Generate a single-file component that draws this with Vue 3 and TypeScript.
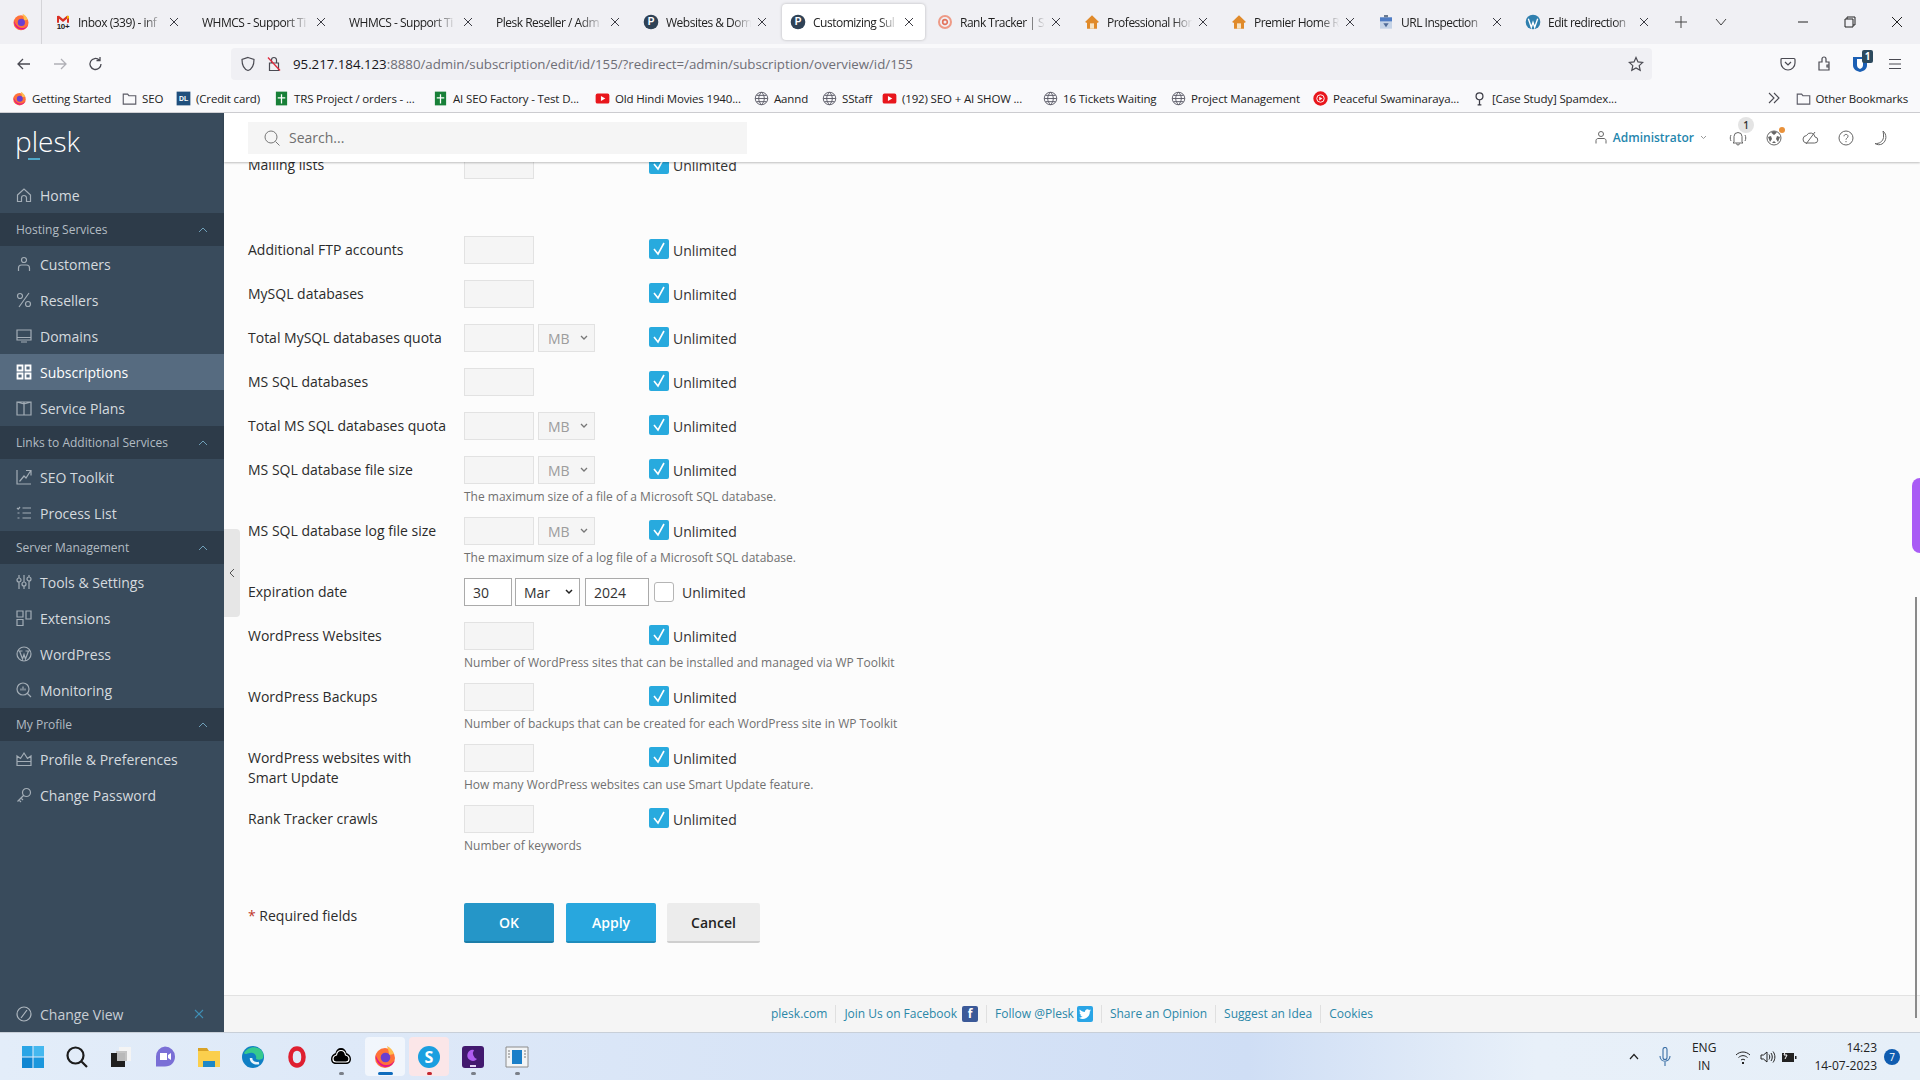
<script setup lang="ts">
type Shape = { d: string; fill?: string; stroke?: string; sw?: number };
type Glyph = { shapes: Shape[]; label?: string; labelColor?: string; labelSize?: number; labelY?: number };

const ring = (cx: number, cy: number, r: number) =>
	`M${cx - r} ${cy}a${r} ${r} 0 1 0 ${r * 2} 0a${r} ${r} 0 1 0 ${-r * 2} 0z`;

const firefox: Shape[] = [
	{ d: ring(12, 13, 10), fill: "#ff7139" },
	{ d: "M14 1c3 1.500 6 4 7 8l-5 1c0-3-1-6-2-9z", fill: "#ffbd4f" },
	{ d: "M2.500 10c0 7 5 12.500 11 12 4-.3 7-3 8-6.500-2 3-5 5-9 4.500-5-.5-8-5-10-10z", fill: "#e31587" },
	{ d: ring(12.500, 12.500, 4.800), fill: "#6a3fd0" },
];

const favicons: Record<string, Glyph> = {
	none: { shapes: [] },
	gmail: {
		shapes: [
			{ d: "M3 3v10h3V7l6 5 6-5v6h3V3l-3-.5-6 5-6-5z", fill: "#d93025" },
			{ d: "M18 2.500 21 3v3l-3 2z", fill: "#f4b400" },
		],
		label: "10+",
		labelColor: "#222",
		labelSize: 12,
		labelY: 23,
	},
	plesk: {
		shapes: [{ d: ring(12, 12, 11), fill: "#2f4256" }],
		label: "P",
		labelColor: "#fff",
		labelSize: 15,
		labelY: 17,
	},
	rank: {
		shapes: [
			{ d: ring(12, 12, 9), stroke: "#ee9a86", sw: 3 },
			{ d: ring(12, 12, 3.500), stroke: "#e2725b", sw: 2.500 },
		],
	},
	house: {
		shapes: [
			{ d: "M12 2 1.500 12l3 1.500V22h15v-8.500l3-1.500z", fill: "#e08a2a" },
			{ d: "M9 14h6v8H9z", fill: "#f7e3c3" },
		],
	},
	inspect: {
		shapes: [
			{ d: "M3 5h18v17H3z", fill: "#c5d3e6" },
			{ d: "M3 5h18v6H3z", fill: "#4f7cc4" },
			{ d: "M9 1.500h6V5H9z", fill: "#6b7a90" },
			{ d: "M8 14h8l-4 6z", fill: "#4f6a96" },
		],
	},
	wp: {
		shapes: [
			{ d: ring(12, 12, 11), fill: "#2f7fae" },
			{ d: "M5 7l4.500 13L12 12.500 14.500 20 19 7", stroke: "#fff", sw: 2 },
		],
	},
	firefox: { shapes: firefox },
	folder: {
		shapes: [{ d: "M2 5h7l2 2.500h11V21H2z", stroke: "#5b5b66", sw: 1.800 }],
	},
	dl: {
		shapes: [{ d: "M1 1h22v22H1z", fill: "#1f4f7d" }],
		label: "DL",
		labelColor: "#fff",
		labelSize: 11,
		labelY: 16,
	},
	sheet: {
		shapes: [
			{ d: "M3 1h18v22H3z", fill: "#188038" },
			{ d: "M11 5h2v5h5v2h-5v8h-2v-8H6v-2h5z", fill: "#fff" },
		],
	},
	yt: {
		shapes: [
			{ d: "M4 4h16a3 3 0 0 1 3 3v10a3 3 0 0 1-3 3H4a3 3 0 0 1-3-3V7a3 3 0 0 1 3-3z", fill: "#e8161c" },
			{ d: "M9.500 8v8l7-4z", fill: "#fff" },
		],
	},
	ytm: {
		shapes: [
			{ d: ring(12, 12, 11.500), fill: "#e8161c" },
			{ d: ring(12, 12, 6), stroke: "#fff", sw: 1.500 },
			{ d: "M10 9v6l5-3z", fill: "#fff" },
		],
	},
	globe: {
		shapes: [
			{
				d: `${ring(12, 12, 10)}M2 12h20M12 2c-6 6-6 14 0 20M12 2c6 6 6 14 0 20M4 7h16M4 17h16`,
				stroke: "#5b5b66",
				sw: 1.500,
			},
		],
	},
	pin: {
		shapes: [
			{ d: `${ring(12, 8.500, 5.500)}M12 14v7M9 22h6`, stroke: "#3a3a44", sw: 2 },
		],
	},
};

const tabs = [
	{ icon: "gmail", title: "Inbox (339) - inf", on: false },
	{ icon: "none", title: "WHMCS - Support Ti", on: false },
	{ icon: "none", title: "WHMCS - Support Ti", on: false },
	{ icon: "none", title: "Plesk Reseller / Adm", on: false },
	{ icon: "plesk", title: "Websites & Dom", on: false },
	{ icon: "plesk", title: "Customizing Sul", on: true },
	{ icon: "rank", title: "Rank Tracker | Se", on: false },
	{ icon: "house", title: "Professional Hon", on: false },
	{ icon: "house", title: "Premier Home R", on: false },
	{ icon: "inspect", title: "URL Inspection", on: false },
	{ icon: "wp", title: "Edit redirection", on: false },
];

const bookmarks = [
	{ icon: "firefox", text: "Getting Started", w: 110 },
	{ icon: "folder", text: "SEO", w: 54 },
	{ icon: "dl", text: "(Credit card)", w: 98 },
	{ icon: "sheet", text: "TRS Project / orders - ...", w: 159 },
	{ icon: "sheet", text: "AI SEO Factory - Test D...", w: 162 },
	{ icon: "yt", text: "Old Hindi Movies 1940...", w: 159 },
	{ icon: "globe", text: "Aannd", w: 68 },
	{ icon: "globe", text: "SStaff", w: 60 },
	{ icon: "yt", text: "(192) SEO + AI SHOW ...", w: 161 },
	{ icon: "globe", text: "16 Tickets Waiting", w: 128 },
	{ icon: "globe", text: "Project Management", w: 142 },
	{ icon: "ytm", text: "Peaceful Swaminaraya...", w: 159 },
	{ icon: "pin", text: "[Case Study] Spamdex...", w: 150 },
];

type NavItem = { name: string; d: string; on?: boolean };
type NavGroup = { title?: string; items: NavItem[] };

const nav: NavGroup[] = [
	{
		items: [{ name: "Home", d: "M1.500 8 8 2l6.500 6v6.500h-4v-3.500a2.500 2.500 0 0 0-5 0v3.500h-4z" }],
	},
	{
		title: "Hosting Services",
		items: [
			{ name: "Customers", d: `${ring(8, 4, 2.500)}M2.500 15v-3c0-2 1.500-3 3-3h5c1.500 0 3 1 3 3v3` },
			{ name: "Resellers", d: `M3 15 13 1${ring(4, 4, 2.500)}${ring(12, 12, 2.500)}` },
			{ name: "Domains", d: "M1 2h14v10H1zM1 9.500h14M5 14h6" },
			{ name: "Subscriptions", d: "M1.500 1.500h5v5h-5zM9.500 1.500h5v5h-5zM1.500 9.500h5v5h-5zM9.500 9.500h5v5h-5z", on: true },
			{ name: "Service Plans", d: "M1 2h14v13H1zM8 2v13M1 2l7 2 7-2" },
		],
	},
	{
		title: "Links to Additional Services",
		items: [
			{ name: "SEO Toolkit", d: "M1 1v14h14M3.500 12.500 8 7l2 2 4.500-7M10 1.500h5v5" },
			{ name: "Process List", d: "M1 3l1.200 1.200L4 2M6.500 3H15M1.500 8h2M6.500 8H15M1.500 13h2M6.500 13H15" },
		],
	},
	{
		title: "Server Management",
		items: [
			{
				name: "Tools & Settings",
				d: `M3 1v3M3 8v7M8 1v7M8 12v3M13 1v2M13 7v8${ring(3, 6, 2)}${ring(8, 10, 2)}${ring(13, 5, 2)}`,
			},
			{ name: "Extensions", d: "M1 1h6v6H1zM1 9.500h6v6H1zM10 1h5v8h-5z" },
			{ name: "WordPress", d: `${ring(8, 8, 7)}M3.500 5l3 8L8 8.500 9.500 13l3-8M2.500 5h4M9.500 5h4` },
			{ name: "Monitoring", d: `${ring(7, 7, 6)}M11.500 11.500 15 15M5 8.500V6.500M7 8.500v-4M9 8.500V6.500` },
		],
	},
	{
		title: "My Profile",
		items: [
			{ name: "Profile & Preferences", d: "M1 5l3.500 2.500L8 2l3.500 5.500L15 5v9.500H1zM1 10.500h14" },
			{ name: "Change Password", d: `${ring(10.500, 5.500, 4)}M7.500 8.500 1.500 14.500M3 13l2 2M5 11l2 2` },
		],
	},
];

type Row = { label: string; select?: boolean; hint?: string; date?: boolean; spaced?: boolean };

const rows: Row[] = [
	{ label: "Mailing lists" },
	{ label: "Additional FTP accounts", spaced: true },
	{ label: "MySQL databases" },
	{ label: "Total MySQL databases quota", select: true },
	{ label: "MS SQL databases" },
	{ label: "Total MS SQL databases quota", select: true },
	{ label: "MS SQL database file size", select: true, hint: "The maximum size of a file of a Microsoft SQL database." },
	{ label: "MS SQL database log file size", select: true, hint: "The maximum size of a log file of a Microsoft SQL database." },
	{ label: "Expiration date", date: true },
	{ label: "WordPress Websites", hint: "Number of WordPress sites that can be installed and managed via WP Toolkit" },
	{ label: "WordPress Backups", hint: "Number of backups that can be created for each WordPress site in WP Toolkit" },
	{ label: "WordPress websites with Smart Update", hint: "How many WordPress websites can use Smart Update feature." },
	{ label: "Rank Tracker crawls", hint: "Number of keywords" },
];

const footerLinks = ["plesk.com", "Join Us on Facebook", "Follow @Plesk", "Share an Opinion", "Suggest an Idea", "Cookies"];

const taskbar: { shapes: Shape[]; label?: string; cls?: string }[] = [
	{
		shapes: [
			{ d: "M1 1h10.500v10.500H1z", fill: "#2aa5e6" },
			{ d: "M12.500 1H23v10.500H12.500z", fill: "#45b8ef" },
			{ d: "M1 12.500h10.500V23H1z", fill: "#0f86d2" },
			{ d: "M12.500 12.500H23V23H12.500z", fill: "#1b97dd" },
		],
	},
	{ shapes: [{ d: `${ring(10.500, 10.500, 8)}M16.500 16.500 22 22`, stroke: "#1c1c1c", sw: 2.200 }] },
	{
		shapes: [
			{ d: "M10 2h12v14H10z", fill: "#f4f4f4" },
			{ d: "M7 6h11v10H7z", fill: "#c4c4c4" },
			{ d: "M2 8h14v14H2z", fill: "#1f1f1f" },
			{ d: "M8 8h8v8H8z", fill: "#b9b9b9" },
		],
	},
	{
		shapes: [
			{ d: "M12 1.500a10 10 0 0 1 10 10c0 6-4 10-10 10H3v-10a10 10 0 0 1 9-10z", fill: "#7a6fd6" },
			{ d: "M7 8h7v7H7zM15 10l3-2v7l-3-2z", fill: "#fff" },
		],
	},
	{
		shapes: [
			{ d: "M1 3h9l2 3H1z", fill: "#d9a226" },
			{ d: "M1 6h22v16H1z", fill: "#fbcf4d" },
			{ d: "M6 16h12v6H6z", fill: "#1e88c7" },
		],
	},
	{
		shapes: [
			{ d: ring(12, 12, 11), fill: "#0f7fc4" },
			{ d: "M3 8c3-6 12-8 17-3 2 2 3 5 2 8-1 2-5 2-7 1 1-4-2-7-6-6-3 .5-5 2-6 0z", fill: "#36c98d" },
			{ d: "M10 13c0 4 4 6 8 5", stroke: "#e8f4fb", sw: 2.500 },
		],
	},
	{ shapes: [{ d: "M12 3.500c-4 0-6.500 3.800-6.500 8.500s2.500 8.500 6.500 8.500 6.500-3.800 6.500-8.500S16 3.500 12 3.500z", stroke: "#df1f30", sw: 4.500 }] },
	{
		shapes: [
			{
				d: "M12 3c-3 0-5 2-5.500 5C4 9 2 11 2 14c0 3 2 5 5 5h10c3 0 5-2 5-5 0-3-2-5-4.500-6C17 5 15 3 12 3z",
				fill: "#000",
			},
			{ d: "M7 17h10c2 0 3-1 3-3s-1.500-3.500-3.500-4C16 7 14.500 5.500 12 5.500S8 7 7.500 10C5.500 10.500 4 12 4 14s1 3 3 3z", stroke: "#fff", sw: 1.200 },
		],
	},
	{ shapes: firefox },
	{ shapes: [{ d: ring(12, 12, 11), fill: "#1b9fe0" }], label: "S" },
	{
		shapes: [
			{ d: "M4 1h16a3 3 0 0 1 3 3v16a3 3 0 0 1-3 3H4a3 3 0 0 1-3-3V4a3 3 0 0 1 3-3z", fill: "#42196e" },
			{ d: "M13 5a5.500 5.500 0 1 0 3 9 6 6 0 0 1-3-9z", fill: "#b05cf0" },
			{ d: "M9 20h6v2H9z", fill: "#e3d3f3" },
		],
	},
	{
		shapes: [
			{ d: "M1 2h22v20H1z", fill: "#f2f4f6", stroke: "#8c8c8c", sw: 1 },
			{ d: "M7 5h10v14H7z", fill: "#1a7fc9" },
			{ d: "M3 6h2M3 9h2M3 12h2M19 6h2M19 9h2M19 12h2", stroke: "#7a7a7a", sw: 1 },
		],
	},
];
</script>

<template>
	<div class="screen">
		<div class="tabstrip">
			<div class="browser-logo">
				<svg width="18" height="18" viewBox="0 0 24 24">
					<path v-for="s in firefox" :d="s.d" :fill="s.fill" />
				</svg>
			</div>
			<div v-for="tab in tabs" class="tab" :class="{ on: tab.on }">
				<svg v-if="tab.icon !== 'none'" class="fav" viewBox="0 0 24 24">
					<path
						v-for="s in favicons[tab.icon].shapes"
						:d="s.d"
						:fill="s.fill || 'none'"
						:stroke="s.stroke"
						:stroke-width="s.sw"
					/>
					<text
						v-if="favicons[tab.icon].label"
						x="12"
						:y="favicons[tab.icon].labelY"
						text-anchor="middle"
						font-family="Liberation Sans"
						font-weight="700"
						:font-size="favicons[tab.icon].labelSize"
						:fill="favicons[tab.icon].labelColor"
					>{{ favicons[tab.icon].label }}</text>
				</svg>
				<span class="tab-title">{{ tab.title }}</span>
				<svg class="tab-close" width="10" height="10" viewBox="0 0 10 10">
					<path d="M1 1l8 8M9 1l-8 8" stroke="#3c3c44" stroke-width="1" fill="none" />
				</svg>
			</div>
			<svg class="strip-plus" width="12" height="12" viewBox="0 0 12 12">
				<path d="M6 0v12M0 6h12" stroke="#444" stroke-width="1" fill="none" />
			</svg>
			<svg class="strip-more" width="12" height="8" viewBox="0 0 12 8">
				<path d="M1 1l5 6 5-6" stroke="#444" stroke-width="1" fill="none" />
			</svg>
			<div class="win-controls">
				<svg width="12" height="12" viewBox="0 0 12 12"><path d="M1 6h10" stroke="#222" fill="none" /></svg>
				<svg width="12" height="12" viewBox="0 0 12 12">
					<path d="M3 3V1h8v8H9M1 3h8v8H1z" stroke="#222" fill="none" />
				</svg>
				<svg width="12" height="12" viewBox="0 0 12 12"><path d="M1 1l10 10M11 1L1 11" stroke="#222" fill="none" /></svg>
			</div>
		</div>

		<div class="navbar">
			<div class="nav-buttons">
				<svg width="16" height="16" viewBox="0 0 16 16">
					<path d="M14 8H2M7 3 2 8l5 5" stroke="#4a4a52" stroke-width="1.300" fill="none" />
				</svg>
				<svg width="16" height="16" viewBox="0 0 16 16">
					<path d="M2 8h12M9 3l5 5-5 5" stroke="#b0b0b6" stroke-width="1.300" fill="none" />
				</svg>
				<svg width="16" height="16" viewBox="0 0 16 16">
					<path d="M13 8a5.500 5.500 0 1 1-1.700-4M12 1v3.500H8.500" stroke="#4a4a52" stroke-width="1.300" fill="none" />
				</svg>
			</div>
			<div class="urlbar">
				<svg width="16" height="16" viewBox="0 0 16 16">
					<path d="M8 1.500l6 2c0 6-1.500 9.500-6 11-4.500-1.500-6-5-6-11z" stroke="#4a4a52" stroke-width="1.200" fill="none" />
				</svg>
				<svg class="lock" width="16" height="16" viewBox="0 0 16 16">
					<path d="M3.500 7h9v7.500h-9zM5.500 7V4a2.500 2.500 0 0 1 5 0v3" stroke="#4a4a52" stroke-width="1.200" fill="none" />
					<path d="M2 1.500l12 13" stroke="#e0293d" stroke-width="1.300" fill="none" />
				</svg>
				<span class="url"><b>95.217.184.123</b>:8880/admin/subscription/edit/id/155/?redirect=/admin/subscription/overview/id/155</span>
				<svg class="star" width="16" height="16" viewBox="0 0 16 16">
					<path d="M8 1.500l2 4.400 4.700.5-3.500 3.200 1 4.700L8 11.900l-4.200 2.400 1-4.700L1.300 6.400 6 5.900z" stroke="#4a4a52" stroke-width="1.200" fill="none" />
				</svg>
			</div>
			<div class="nav-tools">
				<svg width="16" height="16" viewBox="0 0 16 16">
					<path d="M2 2.500h12a1 1 0 0 1 1 1V7a7 7 0 0 1-14 0V3.500a1 1 0 0 1 1-1zM5 6l3 3 3-3" stroke="#4a4a52" stroke-width="1.200" fill="none" />
				</svg>
				<svg width="16" height="16" viewBox="0 0 16 16">
					<path d="M3 6h3V3a2 2 0 0 1 4 0v3h3v8H3zM13 9h-2v2h2" stroke="#4a4a52" stroke-width="1.200" fill="none" />
				</svg>
				<div class="ext">
					<svg width="16" height="18" viewBox="0 0 16 18">
						<path d="M1 2h14v8c0 4-3 6-7 7-4-1-7-3-7-7z" fill="#1b5fb4" />
						<path d="M5 4h6v6c0 2-1 3-3 4-2-1-3-2-3-4z" fill="#fff" />
					</svg>
					<span class="ext-badge">1</span>
				</div>
				<svg width="14" height="12" viewBox="0 0 14 12">
					<path d="M1 1.500h12M1 6h12M1 10.500h12" stroke="#4a4a52" stroke-width="1.200" fill="none" />
				</svg>
			</div>
		</div>

		<div class="bookmarks">
			<div v-for="mark in bookmarks" class="mark" :style="{ width: mark.w + 'px' }">
				<svg class="mark-icon" viewBox="0 0 24 24">
					<path
						v-for="s in favicons[mark.icon].shapes"
						:d="s.d"
						:fill="s.fill || 'none'"
						:stroke="s.stroke"
						:stroke-width="s.sw"
					/>
					<text
						v-if="favicons[mark.icon].label"
						x="12"
						:y="favicons[mark.icon].labelY"
						text-anchor="middle"
						font-family="Liberation Sans"
						font-weight="700"
						:font-size="favicons[mark.icon].labelSize"
						:fill="favicons[mark.icon].labelColor"
					>{{ favicons[mark.icon].label }}</text>
				</svg>
				<span>{{ mark.text }}</span>
			</div>
			<div class="mark-end">
				<svg width="14" height="12" viewBox="0 0 14 12">
					<path d="M2 1l5 5-5 5M7 1l5 5-5 5" stroke="#4a4a52" stroke-width="1.100" fill="none" />
				</svg>
				<svg class="mark-icon" viewBox="0 0 24 24">
					<path :d="favicons.folder.shapes[0].d" fill="none" stroke="#5b5b66" stroke-width="1.800" />
				</svg>
				<span>Other Bookmarks</span>
			</div>
		</div>

		<div class="app">
			<aside class="sidebar">
				<div class="logo">
					<span class="logo-text">plesk</span>
					<i class="logo-bar"></i>
				</div>
				<template v-for="group in nav">
					<div v-if="group.title" class="nav-group">
						<span>{{ group.title }}</span>
						<svg width="10" height="6" viewBox="0 0 10 6">
							<path d="M1 5l4-4 4 4" stroke="#6f9fb8" stroke-width="1" fill="none" />
						</svg>
					</div>
					<div v-for="item in group.items" class="nav-item" :class="{ on: item.on }">
						<svg width="16" height="16" viewBox="0 0 16 16">
							<path :d="item.d" fill="none" stroke="currentColor" :stroke-width="item.on ? 1.800 : 1.200" />
						</svg>
						<span>{{ item.name }}</span>
					</div>
				</template>
				<div class="change-view">
					<svg width="16" height="16" viewBox="0 0 16 16">
						<path d="M1 8a7 7 0 1 0 14 0a7 7 0 1 0-14 0zM11 4l-6 8" stroke="#aeb7bf" stroke-width="1.200" fill="none" />
					</svg>
					<span>Change View</span>
					<svg class="view-close" width="10" height="10" viewBox="0 0 10 10">
						<path d="M1 1l8 8M9 1l-8 8" stroke="#3f8fb5" stroke-width="1.100" fill="none" />
					</svg>
				</div>
			</aside>

			<main class="main">
				<header class="topbar">
					<div class="search">
						<svg width="16" height="16" viewBox="0 0 16 16">
							<path d="M1 7a6 6 0 1 0 12 0a6 6 0 1 0-12 0zM11.500 11.500 15.500 15.500" stroke="#777" stroke-width="1" fill="none" />
						</svg>
						<span>Search...</span>
					</div>
					<div class="account">
						<svg width="12" height="13" viewBox="0 0 12 13">
							<path d="M3.500 3a2.500 2.500 0 1 0 5 0a2.500 2.500 0 1 0-5 0zM1 12.500V9.500c0-1 1-2 2-2h6c1 0 2 1 2 2v3" stroke="#666" fill="none" />
						</svg>
						<span class="admin">Administrator</span>
						<svg width="7" height="5" viewBox="0 0 7 5"><path d="M1 1l2.500 2.500L6 1" stroke="#999" fill="none" /></svg>
					</div>
					<div class="top-icons">
						<div class="top-icon">
							<svg width="18" height="16" viewBox="0 0 18 16">
								<path d="M5 12V6.500a4 4 0 0 1 8 0V12l1 1H4zM7.500 13.500a1.500 1.500 0 0 0 3 0M2 5c-1 2-1 4 0 6M16 5c1 2 1 4 0 6" stroke="#666" fill="none" />
							</svg>
							<span class="bell-badge">1</span>
						</div>
						<div class="top-icon">
							<svg width="18" height="18" viewBox="0 0 18 18">
								<path d="M2 9a7 7 0 1 0 14 0a7 7 0 1 0-14 0z" stroke="#666" fill="none" />
								<path d="M6 3.500 9 6l3-2.500-3-1.500zM3 8l3-1 1 3-2 3zM15 8l-3-1-1 3 2 3zM7 14h4l-2-2z" fill="#666" />
							</svg>
							<i class="orange-dot"></i>
						</div>
						<div class="top-icon">
							<svg width="18" height="16" viewBox="0 0 18 16">
								<path d="M5 13h8.500a3 3 0 0 0 .5-6 4.500 4.500 0 0 0-8.500-1.500A3.800 3.800 0 0 0 5 13zM14 2 5 14" stroke="#666" fill="none" />
							</svg>
						</div>
						<div class="top-icon">
							<svg width="16" height="16" viewBox="0 0 16 16">
								<path d="M1 8a7 7 0 1 0 14 0a7 7 0 1 0-14 0zM6 6.300c0-2.500 4-2.500 4 0 0 1.700-2 1.700-2 3.400M8 11v1.200" stroke="#666" fill="none" />
							</svg>
						</div>
						<div class="top-icon">
							<svg width="16" height="16" viewBox="0 0 16 16">
								<path d="M9 1c4 3 4 10-1 13-2 1-5 1-7-.5 4 .5 8-2 8.500-6C9.700 5 9.500 3 9 1z" stroke="#666" fill="none" />
							</svg>
						</div>
					</div>
				</header>

				<div class="content">
					<form class="form" @submit.prevent>
						<div v-for="row in rows" class="row" :class="{ spaced: row.spaced, 'has-hint': row.hint }">
							<label class="row-label">{{ row.label }}</label>
							<div class="row-body">
								<div v-if="row.date" class="controls date">
									<input class="text day" value="30" />
									<select class="text month"><option>Mar</option></select>
									<input class="text year" value="2024" />
									<input class="check plain" type="checkbox" />
									<span class="unl">Unlimited</span>
								</div>
								<div v-else class="controls">
									<div class="fields">
										<input class="text num" disabled />
										<select v-if="row.select" class="text unit" disabled><option>MB</option></select>
									</div>
									<input class="check" type="checkbox" :checked="true" />
									<span class="unl">Unlimited</span>
								</div>
								<div v-if="row.hint" class="hint">{{ row.hint }}</div>
							</div>
						</div>

						<div class="actions">
							<div class="required"><em>*</em> Required fields</div>
							<button class="btn ok" type="button">OK</button>
							<button class="btn apply" type="button">Apply</button>
							<button class="btn cancel" type="button">Cancel</button>
						</div>
					</form>
					<div class="collapse">
						<svg width="6" height="10" viewBox="0 0 6 10"><path d="M5 1 1 5l4 4" stroke="#555" fill="none" /></svg>
					</div>
					<i class="side-pill"></i>
					<i class="thumb"></i>
				</div>

				<footer class="footer">
					<template v-for="(link, key) in footerLinks">
						<a class="foot-link" :class="{ first: key === 0 }">
							{{ link }}
							<span v-if="key === 1" class="social fb">f</span>
							<span v-if="key === 2" class="social tw">
								<svg width="12" height="10" viewBox="0 0 12 10">
									<path d="M12 1.200c-.5.200-.9.300-1.400.4.500-.3.900-.8 1.100-1.300-.5.300-1 .5-1.600.6A2.500 2.500 0 0 0 5.900 3C3.900 2.900 2 1.900.8.400c-.6 1.100-.3 2.500.8 3.300-.4 0-.8-.1-1.100-.3 0 1.200.8 2.200 2 2.500-.4.100-.7.100-1.100 0 .3 1 1.300 1.700 2.300 1.700A5 5 0 0 1 0 8.700 7 7 0 0 0 10.800 2.500c.5-.3.900-.8 1.200-1.300z" fill="#fff" />
								</svg>
							</span>
						</a>
					</template>
				</footer>
			</main>
		</div>

		<div class="taskbar">
			<div class="task-apps">
				<div v-for="(app, key) in taskbar" class="task-app" :class="'app-' + key">
					<svg width="24" height="24" viewBox="0 0 24 24">
						<path
							v-for="s in app.shapes"
							:d="s.d"
							:fill="s.fill || 'none'"
							:stroke="s.stroke"
							:stroke-width="s.sw"
						/>
						<text
							v-if="app.label"
							x="12"
							y="18"
							text-anchor="middle"
							font-family="Open Sans"
							font-weight="700"
							font-size="16"
							fill="#fff"
						>{{ app.label }}</text>
					</svg>
					<i v-if="key >= 7" class="task-dot"></i>
				</div>
			</div>
			<div class="tray">
				<svg width="10" height="7" viewBox="0 0 10 7"><path d="M1 6l4-4.500L9 6" stroke="#222" stroke-width="1.200" fill="none" /></svg>
				<svg class="mic" width="14" height="20" viewBox="0 0 14 20">
					<path d="M5 2.500a2 2 0 0 1 4 0v8a2 2 0 0 1-4 0zM2 9c0 7 10 7 10 0M7 15v4" stroke="#3a6ea5" stroke-width="1.100" fill="none" />
				</svg>
				<div class="lang"><span>ENG</span><span>IN</span></div>
				<svg class="wifi" width="16" height="14" viewBox="0 0 16 14">
					<path d="M1 5c4-4 10-4 14 0M3.500 7.500c3-2.500 6-2.500 9 0M6 10c1.500-1 2.500-1 4 0" stroke="#222" fill="none" />
					<path d="M7 12h2v2H7z" fill="#222" />
				</svg>
				<svg class="sound" width="16" height="14" viewBox="0 0 16 14">
					<path d="M1 5h2.500L7 2v10L3.500 9H1zM9 4.500c1 1.500 1 3.500 0 5M11 3c1.700 2.300 1.700 5.700 0 8M13 1.500c2.500 3.300 2.500 7.700 0 11" stroke="#222" fill="none" />
				</svg>
				<svg class="battery" width="16" height="14" viewBox="0 0 16 14">
					<path d="M1 3h12v9H1z" fill="#222" />
					<path d="M14 6h1.500v3H14z" fill="#222" />
					<path d="M5 0 3 5h3L4 9" stroke="#fff" fill="none" />
				</svg>
				<div class="clock"><span>14:23</span><span>14-07-2023</span></div>
				<span class="notify">7</span>
			</div>
		</div>
	</div>
</template>

<style>
html,
body {
	margin: 0;
	overflow: hidden;
}
</style>

<style scoped>
.screen {
	display: flex;
	flex-direction: column;
	width: 1920px;
	height: 1080px;
	font-family: "Open Sans", "Liberation Sans", sans-serif;
	color: #222;
	overflow: hidden;
}

.tabstrip {
	display: flex;
	align-items: center;
	flex: none;
	gap: 4px;
	height: 44px;
	background: #f0f0f4;
	position: relative;
}

.browser-logo {
	display: flex;
	align-items: center;
	justify-content: center;
	width: 42px;
	height: 44px;
	margin-right: 1px;
	border-right: 1px solid #d4d4d8;
	box-sizing: border-box;
}

.tab {
	display: flex;
	align-items: center;
	flex: none;
	box-sizing: border-box;
	width: 143px;
	height: 36px;
	padding: 0 11px 0 8px;
	border-radius: 4px;
	font-size: 12px;
	letter-spacing: -0.5px;
}

.tab.on {
	background: #fff;
	box-shadow: 0 0 3px rgba(0, 0, 0, 0.25);
}

.fav {
	flex: none;
	width: 16px;
	height: 16px;
	margin-right: 7px;
}

.tab-title {
	flex: 1;
	min-width: 0;
	white-space: nowrap;
	overflow: hidden;
	-webkit-mask-image: linear-gradient(to right, #000 75%, transparent 97%);
	mask-image: linear-gradient(to right, #000 75%, transparent 97%);
}

.tab-close {
	flex: none;
	margin-left: 3px;
}

.strip-plus {
	margin-left: 11px;
}

.strip-more {
	margin-left: 24px;
}

.win-controls {
	display: flex;
	align-items: center;
	gap: 35px;
	margin-left: auto;
	padding-right: 17px;
}

.navbar {
	display: flex;
	align-items: center;
	flex: none;
	height: 40px;
	background: #f9f9fb;
}

.nav-buttons {
	display: flex;
	gap: 20px;
	width: 231px;
	padding-left: 16px;
	box-sizing: border-box;
}

.urlbar {
	display: flex;
	align-items: center;
	width: 1421px;
	height: 32px;
	padding: 0 8px 0 9px;
	box-sizing: border-box;
	background: #f0f0f4;
	border-radius: 4px;
	font-size: 13.300px;
}

.lock {
	margin-left: 10px;
}

.url {
	margin-left: 11px;
	color: #6e6e76;
	white-space: nowrap;
	letter-spacing: -0.03px;
}

.url b {
	color: #15141a;
	font-weight: 400;
}

.star {
	margin-left: auto;
}

.nav-tools {
	display: flex;
	align-items: center;
	gap: 20px;
	margin-left: 128px;
}

.ext {
	position: relative;
	display: flex;
}

.ext-badge {
	position: absolute;
	top: -5px;
	right: -5px;
	width: 11px;
	height: 13px;
	background: #2d4a5e;
	border-radius: 2px;
	color: #fff;
	font-size: 10px;
	font-weight: 700;
	line-height: 13px;
	text-align: center;
}

.bookmarks {
	display: flex;
	align-items: center;
	flex: none;
	height: 29px;
	padding-left: 12px;
	box-sizing: border-box;
	background: #f9f9fb;
	border-bottom: 1px solid #d0d0d4;
	font-size: 11.500px;
	letter-spacing: -0.15px;
}

.mark {
	display: flex;
	align-items: center;
	flex: none;
	white-space: nowrap;
}

.mark-icon {
	flex: none;
	width: 15px;
	height: 15px;
	margin-right: 5px;
}

.mark-end {
	display: flex;
	align-items: center;
	margin-left: auto;
	padding-right: 12px;
	white-space: nowrap;
}

.mark-end .mark-icon {
	margin-left: 15px;
	margin-right: 4px;
}

.app {
	display: flex;
	flex: 1;
	min-height: 0;
}

.sidebar {
	display: flex;
	flex-direction: column;
	flex: none;
	width: 224px;
	background: #394b5c;
	color: #d5dadf;
}

.logo {
	position: relative;
	height: 64px;
	padding-left: 15px;
	box-sizing: border-box;
}

.logo-text {
	color: #fff;
	font-family: "Open Sans", sans-serif;
	font-size: 28px;
	font-weight: 300;
	line-height: 57px;
}

.logo-bar {
	position: absolute;
	left: 28px;
	top: 45px;
	width: 12px;
	height: 2px;
	background: #4fa8c8;
}

.nav-group {
	display: flex;
	align-items: center;
	justify-content: space-between;
	height: 33px;
	padding: 0 16px;
	background: #2d3b49;
	color: #b3bbc3;
	font-size: 12px;
}

.nav-item {
	display: flex;
	align-items: center;
	gap: 8px;
	height: 36px;
	padding-left: 16px;
	font-size: 14px;
	color: #d5dadf;
}

.nav-item svg {
	color: #a3adb6;
}

.nav-item.on {
	background: #566b80;
	color: #fff;
}

.nav-item.on svg {
	color: #fff;
}

.change-view {
	display: flex;
	align-items: center;
	gap: 8px;
	margin-top: auto;
	height: 36px;
	padding: 0 20px 0 16px;
	font-size: 14px;
	color: #c8ced4;
}

.view-close {
	margin-left: auto;
}

.main {
	display: flex;
	flex-direction: column;
	flex: 1;
	min-width: 0;
	background: #fcfcfc;
}

.topbar {
	display: flex;
	align-items: center;
	flex: none;
	height: 49px;
	padding-left: 24px;
	box-sizing: border-box;
	background: #fff;
	box-shadow: 0 1px 2px rgba(0, 0, 0, 0.25);
	position: relative;
	z-index: 2;
}

.search {
	display: flex;
	align-items: center;
	gap: 9px;
	width: 499px;
	height: 32px;
	padding-left: 16px;
	box-sizing: border-box;
	background: #f5f5f5;
	color: #6f6f6f;
	font-size: 14px;
}

.account {
	display: flex;
	align-items: center;
	gap: 6px;
	margin-left: auto;
	font-size: 12px;
}

.admin {
	color: #1f86ad;
	font-weight: 600;
}

.top-icons {
	display: flex;
	margin-left: 13px;
	margin-right: 20px;
}

.top-icon {
	position: relative;
	display: flex;
	align-items: center;
	justify-content: center;
	width: 36px;
	height: 24px;
}

.bell-badge {
	position: absolute;
	top: -9px;
	right: 2px;
	width: 16px;
	height: 16px;
	background: #e4e4e4;
	border-radius: 50%;
	color: #333;
	font-size: 10px;
	font-weight: 600;
	line-height: 16px;
	text-align: center;
}

.orange-dot {
	position: absolute;
	top: 1px;
	right: 7px;
	width: 6px;
	height: 6px;
	background: #e9913a;
	border-radius: 50%;
}

.content {
	position: relative;
	flex: 1;
	min-height: 0;
}

.form {
	margin-top: -11px;
	padding-left: 24px;
	font-size: 14px;
}

.row {
	display: flex;
	padding-bottom: 16px;
}

.row.spaced {
	margin-top: 41px;
}

.row-label {
	flex: none;
	width: 200px;
	margin-right: 16px;
	padding-top: 4px;
	line-height: 20px;
	color: #2b2b2b;
}

.row-body {
	min-width: 0;
}

.controls {
	display: flex;
	align-items: center;
	height: 28px;
}

.fields {
	display: flex;
	gap: 4px;
	width: 185px;
}

.text {
	box-sizing: border-box;
	height: 28px;
	margin: 0;
	padding: 0 8px;
	border: 1px solid #aaa;
	border-radius: 0;
	background-color: #fff;
	font: inherit;
	color: #333;
	outline: none;
}

.text:disabled {
	background-color: #f5f5f5;
	border-color: #e2e2e2;
	color: #9c9c9c;
	opacity: 1;
}

.num {
	width: 70px;
}

.unit,
.month {
	appearance: none;
	background-repeat: no-repeat;
	background-position: right 6px center;
}

.unit {
	width: 57px;
	padding-left: 9px;
	background-image: url("data:image/svg+xml,%3Csvg xmlns='http://www.w3.org/2000/svg' width='8' height='6'%3E%3Cpath d='M1 1l3 3 3-3' stroke='%23777' fill='none' stroke-width='1.300'/%3E%3C/svg%3E");
}

.day {
	width: 48px;
}

.month {
	width: 65px;
	margin: 0 5px 0 3px;
	background-image: url("data:image/svg+xml,%3Csvg xmlns='http://www.w3.org/2000/svg' width='8' height='6'%3E%3Cpath d='M1 1l3 3 3-3' stroke='%23222' fill='none' stroke-width='1.500'/%3E%3C/svg%3E");
}

.year {
	width: 64px;
}

.check {
	appearance: none;
	flex: none;
	width: 20px;
	height: 20px;
	margin: 0 4px 2px 0;
	border-radius: 2px;
	background: #28aade;
}

.check:checked {
	background: #28aade url("data:image/svg+xml,%3Csvg xmlns='http://www.w3.org/2000/svg' width='20' height='20'%3E%3Cpath d='M5 10l4 5 6-11' stroke='%23fff' fill='none' stroke-width='1.600'/%3E%3C/svg%3E") center no-repeat;
}

.check.plain {
	margin: 0 8px 0 5px;
	background: #fff;
	border: 1px solid #b5b5b5;
	box-sizing: border-box;
	border-radius: 3px;
}

.unl {
	color: #333;
}

.hint {
	margin-top: 5px;
	margin-bottom: -4px;
	height: 16px;
	color: #707070;
	font-size: 12px;
	line-height: 16px;
	white-space: nowrap;
}

.actions {
	display: flex;
	align-items: flex-start;
	gap: 12px;
	margin-top: 36px;
}

.required {
	width: 204px;
	padding-top: 4px;
	line-height: 20px;
	color: #2b2b2b;
}

.required em {
	color: #c0392b;
	font-style: normal;
}

.btn {
	height: 40px;
	margin-top: 1px;
	padding: 0;
	border: 0;
	border-bottom: 2px solid;
	border-radius: 2px;
	font: 600 14px "Open Sans", sans-serif;
}

.ok {
	width: 90px;
	background: #2596c8;
	border-color: #1c7da8;
	color: #fff;
}

.apply {
	width: 90px;
	background: #28a7de;
	border-color: #1f8cbc;
	color: #fff;
}

.cancel {
	width: 93px;
	margin-left: -1px;
	background: #ececec;
	border-color: #cfcfcf;
	color: #222;
}

.collapse {
	position: absolute;
	left: 0;
	top: 367px;
	display: flex;
	align-items: center;
	justify-content: center;
	width: 16px;
	height: 88px;
	background: #e6e6e6;
	border-radius: 0 4px 4px 0;
}

.side-pill {
	position: absolute;
	right: 0;
	top: 316px;
	width: 8px;
	height: 75px;
	background: #a95cf5;
	border-radius: 8px 0 0 8px;
}

.thumb {
	position: absolute;
	right: 3px;
	top: 435px;
	width: 2px;
	height: 421px;
	background: #8a8a8a;
}

.footer {
	display: flex;
	align-items: center;
	flex: none;
	height: 37px;
	padding-left: 539px;
	box-sizing: border-box;
	background: #f5f5f5;
	border-top: 1px solid #e2e2e2;
	font-size: 12px;
}

.foot-link {
	display: flex;
	align-items: center;
	gap: 5px;
	padding: 0 8px;
	border-left: 1px solid #e0e0e0;
	color: #2a87a8;
	line-height: 18px;
}

.foot-link.first {
	border-left: 0;
}

.social {
	display: flex;
	align-items: center;
	justify-content: center;
	width: 16px;
	height: 16px;
	border-radius: 2px;
	color: #fff;
	font-weight: 700;
	font-size: 12px;
}

.fb {
	background: #3b5998;
}

.tw {
	margin-left: -2px;
	background: #2aa5e6;
}

.taskbar {
	display: flex;
	align-items: center;
	justify-content: space-between;
	flex: none;
	height: 48px;
	padding-left: 11px;
	box-sizing: border-box;
	background: linear-gradient(90deg, #e3edf9 0%, #d5e2f6 50%, #cfdef5 65%, #e8f0f9 80%, #e6eff8 100%);
	border-top: 1px solid #c8cfd8;
}

.task-apps {
	display: flex;
}

.task-app {
	position: relative;
	display: flex;
	align-items: center;
	justify-content: center;
	width: 44px;
	height: 47px;
}

.app-8::before,
.app-9::before {
	content: "";
	position: absolute;
	left: 2px;
	right: 2px;
	top: 4px;
	bottom: 4px;
	border-radius: 4px;
	background: rgba(255, 255, 255, 0.6);
}

.app-9::before {
	background: #fbe6e8;
}

.task-app svg {
	position: relative;
}

.task-dot {
	position: absolute;
	bottom: 5px;
	left: 50%;
	width: 5px;
	height: 3px;
	margin-left: -2px;
	background: #7a7f88;
	border-radius: 2px;
}

.app-8 .task-dot {
	width: 15px;
	margin-left: -7px;
	background: #0f6cbd;
}

.app-9 .task-dot {
	background: #c4262e;
}

.tray {
	display: flex;
	align-items: center;
	padding-right: 20px;
	font-size: 12px;
	color: #222;
}

.mic {
	margin-left: 19px;
}

.lang {
	display: flex;
	flex-direction: column;
	align-items: center;
	margin-left: 20px;
	line-height: 18px;
}

.wifi {
	margin-left: 19px;
}

.sound {
	margin-left: 9px;
}

.battery {
	margin-left: 5px;
}

.clock {
	display: flex;
	flex-direction: column;
	align-items: flex-end;
	margin-left: 17px;
	line-height: 18px;
}

.notify {
	width: 16px;
	height: 16px;
	margin-left: 7px;
	background: #0f5cb0;
	border-radius: 50%;
	color: #fff;
	font-size: 10px;
	line-height: 16px;
	text-align: center;
}
</style>
